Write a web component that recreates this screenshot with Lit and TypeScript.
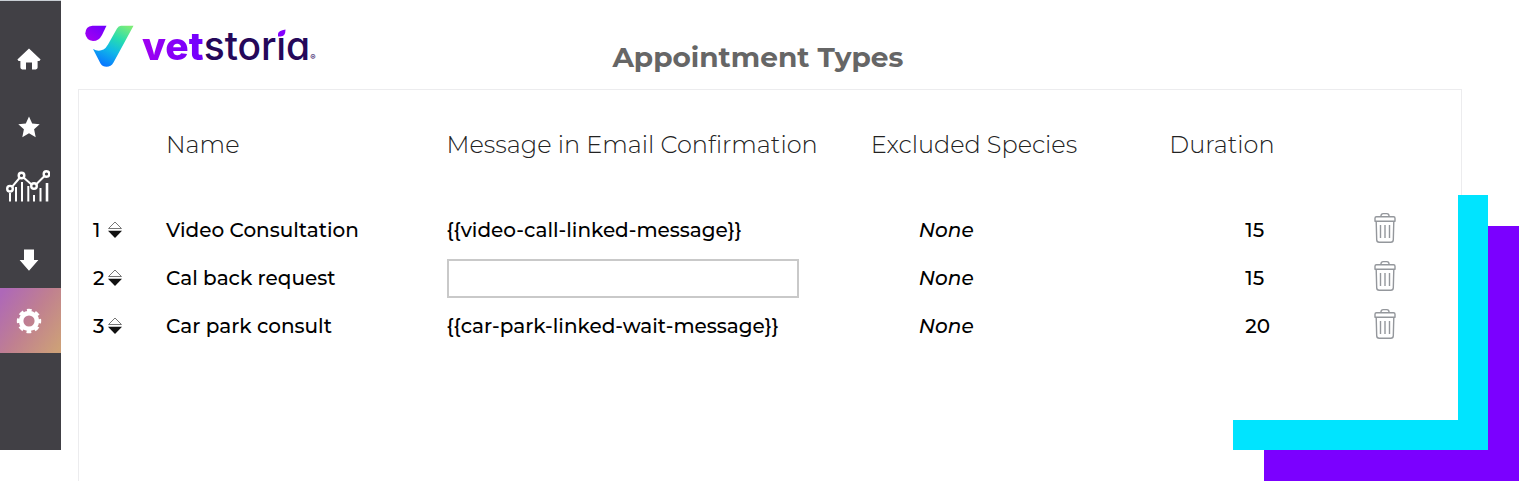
import { LitElement, html, css, svg, nothing } from "lit";
import { customElement, state } from "lit/decorators.js";

interface AppointmentType {
  name: string;
  message: string;
  species: string;
  duration: number;
}

const icons = {
  home: svg`<svg width="24" height="22" viewBox="0 0 24 22" fill="#fff"><path d="M12 .5 23.6 11.6 22.4 13H20.6V19.6Q20.6 21.4 18.8 21.4H15V14.6H9V21.4H5.2Q3.4 21.4 3.4 19.6V13H1.6L.4 11.6Z"/></svg>`,
  star: svg`<svg width="22" height="22" viewBox="0 0 22 22" fill="#fff"><path d="M11 .4 14.2 7.400 21.700 8.200 16.100 13.300 17.700 21.200 11 17.200 4.300 21.200 5.900 13.300.3 8.200 7.800 7.400Z"/></svg>`,
  chart: svg`<svg width="44" height="32" viewBox="0 0 44 32" fill="none" stroke="#fff"><g stroke-width="2"><path d="M4 23V31.500M10 17V31.500M16 12V31.500M22.300 16V31.500M28 25V31.500M34.500 18V31.500"/></g><path stroke-width="2.600" d="M41 13V31.500"/><path stroke-width="2" d="M6 16.800 13.500 8M17.500 7.500 25.500 14.500M30.500 14 38.500 6"/><g stroke-width="2.400"><circle cx="4" cy="18.700" r="2.800"/><circle cx="15.500" cy="5.500" r="2.800"/><circle cx="28" cy="16" r="2.800"/><circle cx="40.500" cy="4" r="2.800"/></g></svg>`,
  down: svg`<svg width="20" height="22" viewBox="0 0 20 22" fill="#fff"><path d="M5 .5H15V11H19.400L10 21.800.6 11H5Z"/></svg>`,
  gear: svg`<svg width="26" height="26" viewBox="0 0 26 26" fill="none" stroke="#fff"><circle cx="13" cy="13" r="7.900" stroke-width="4.600"/><circle cx="13" cy="13" r="10.700" stroke-width="3" stroke-dasharray="4.700 3.703" stroke-dashoffset="2.350"/></svg>`,
  trash: svg`<svg width="24" height="32" viewBox="0 0 24 32" fill="none" stroke="#94979c" stroke-width="1.400" stroke-linejoin="round"><path d="M8 4.500V3.800Q8 1.600 10.200 1.600H13.800Q16 1.600 16 3.800V4.500"/><path d="M3.400 4.700H20.600Q22 4.700 22 6.200V9.300H2V6.200Q2 4.700 3.400 4.700Z"/><path d="M3.200 9.500 3.700 27.800Q3.800 30.300 6.200 30.300H17.800Q20.200 30.300 20.300 27.800L20.800 9.500"/><path d="M7.500 13V26M12 13V26M16.500 13V26"/></svg>`,
  sort: svg`<svg width="16" height="18" viewBox="0 0 16 18"><path d="M1.500 7.500 8 1 14.500 7.500Z" fill="none" stroke="#777" stroke-width="1"/><path d="M1 9.700H15L8 17Z" fill="#111"/></svg>`,
};

@customElement("app-root")
export class AppRoot extends LitElement {
  static styles = css`
    :host {
      display: flex;
      position: relative;
      min-height: 100vh;
      background: #fff;
      color: #000;
      font-family: Montserrat, Inter, "Liberation Sans", sans-serif;
    }
    .sidebar {
      flex: none;
      box-sizing: border-box;
      width: 61px;
      margin-bottom: 31px;
      padding-top: 24px;
      border-top: 1px solid #c8ced4;
      background: #414045;
    }
    .group {
      display: flex;
      flex-direction: column;
    }
    .group + .group {
      margin-top: 21px;
    }
    .item {
      display: flex;
      box-sizing: border-box;
      align-items: center;
      justify-content: center;
      height: 68px;
      padding-right: 3px;
    }
    .item.chart {
      height: 50px;
      padding-right: 5px;
    }
    .item.short {
      height: 56px;
    }
    .item.active {
      height: 65px;
      background: linear-gradient(125deg, #ae68b8 5%, #c08090 50%, #cda078 95%);
    }
    .main {
      display: flex;
      flex: 1;
      flex-direction: column;
      min-width: 0;
      padding: 0 57px 0 17px;
    }
    .header {
      display: grid;
      grid-template-columns: 383fr 617fr;
      height: 89px;
      padding-left: 7px;
    }
    .logo {
      display: flex;
      align-items: flex-start;
      gap: 8px;
      padding-top: 24px;
      color: #25085a;
      text-decoration: none;
    }
    .word {
      display: flex;
      align-items: baseline;
      font-family: Inter, sans-serif;
      font-size: 39px;
      font-weight: 500;
      line-height: 44px;
      font-feature-settings: "cv11";
    }
    .vet {
      background: linear-gradient(90deg, #a000f0, #6f00ff);
      background-clip: text;
      -webkit-background-clip: text;
      color: transparent;
      font-weight: 800;
    }
    .dotted {
      position: relative;
    }
    .leaf {
      position: absolute;
      top: 2px;
      left: 0;
    }
    .reg {
      font-size: 8px;
    }
    .title {
      margin: 0;
      padding-top: 39px;
      color: #666;
      font-size: 28px;
      font-weight: 700;
      line-height: 36px;
      white-space: nowrap;
    }
    .panel {
      flex: 1;
      border: 1px solid #ececee;
      border-bottom: 0;
    }
    .types {
      width: 100%;
      border-collapse: collapse;
      table-layout: fixed;
      text-align: left;
      white-space: nowrap;
    }
    .c-order { width: 6.3%; }
    .c-name { width: 20.3%; }
    .c-message { width: 30.7%; }
    .c-species { width: 21.6%; }
    .c-duration { width: 12.4%; }
    th {
      height: 77px;
      padding: 39px 0 0;
      color: #222;
      font-size: 24px;
      font-weight: 300;
      line-height: 32px;
      vertical-align: top;
    }
    td {
      height: 48px;
      padding: 0;
      font-size: 20px;
      font-weight: 500;
      line-height: 28px;
    }
    .order {
      display: flex;
      align-items: center;
      gap: 2px;
      padding-left: 14px;
    }
    .digit {
      width: 12px;
    }
    .species {
      padding-left: 48px;
      font-style: italic;
    }
    .duration {
      padding-left: 76px;
    }
    button {
      display: flex;
      padding: 0;
      border: 0;
      background: none;
      cursor: pointer;
    }
    .remove {
      margin: 0 auto;
      padding: 0 32px 4px 0;
    }
    .field {
      display: block;
      box-sizing: border-box;
      width: 83%;
      height: 39px;
      padding: 0 8px;
      border: 2px solid #c9c9c9;
      background: #fff;
      font: inherit;
    }
    .corner {
      position: absolute;
      box-sizing: border-box;
      width: 255px;
      height: 255px;
      pointer-events: none;
    }
    .violet {
      right: 0;
      bottom: 0;
      border-right: 31px solid #7b00ff;
      border-bottom: 31px solid #7b00ff;
    }
    .cyan {
      right: 31px;
      bottom: 31px;
      border-right: 30px solid #00e4ff;
      border-bottom: 30px solid #00e4ff;
    }
  `;

  @state() private rows: AppointmentType[] = [
    { name: "Video Consultation", message: "{{video-call-linked-message}}", species: "None", duration: 15 },
    { name: "Cal back request", message: "", species: "None", duration: 15 },
    { name: "Car park consult", message: "{{car-park-linked-wait-message}}", species: "None", duration: 20 },
  ];

  private remove(row: AppointmentType) {
    this.rows = this.rows.filter((r) => r !== row);
  }

  private moveDown(i: number) {
    if (i >= this.rows.length - 1) return;
    const next = [...this.rows];
    [next[i], next[i + 1]] = [next[i + 1], next[i]];
    this.rows = next;
  }

  private renderRow(row: AppointmentType, i: number) {
    return html`<tr>
      <td>
        <div class="order">
          <span class="digit">${i + 1}</span>
          <button aria-label="Reorder" @click=${() => this.moveDown(i)}>${icons.sort}</button>
        </div>
      </td>
      <td>${row.name}</td>
      <td>${row.message ? row.message : html`<input class="field" type="text" aria-label="Message" />`}</td>
      <td class="species">${row.species}</td>
      <td class="duration">${row.duration}</td>
      <td><button class="remove" aria-label="Delete" @click=${() => this.remove(row)}>${icons.trash}</button></td>
    </tr>`;
  }

  private link(label: string, icon: unknown, kind = "") {
    return html`<a class="item ${kind}" href="#" aria-label=${label}
      aria-current=${kind === "active" ? "page" : nothing}>${icon}</a>`;
  }

  render() {
    return html`
      <nav class="sidebar">
        <div class="group">
          ${this.link("Home", icons.home)} ${this.link("Favourites", icons.star)}
          ${this.link("Reports", icons.chart, "chart")}
        </div>
        <div class="group">
          ${this.link("Downloads", icons.down, "short")} ${this.link("Settings", icons.gear, "active")}
        </div>
      </nav>
      <main class="main">
        <header class="header">
          <a class="logo" href="#">
            <svg width="49" height="44" viewBox="0 0 49 44">
              <defs>
                <linearGradient id="drop" x1="0" y1="1" x2="1" y2="0">
                  <stop offset="0" stop-color="#a800f0" /><stop offset="1" stop-color="#6c00ff" />
                </linearGradient>
                <linearGradient id="tick" x1=".85" y1="0" x2=".35" y2="1">
                  <stop offset="0" stop-color="#7cec78" /><stop offset=".35" stop-color="#26dcb0" />
                  <stop offset=".65" stop-color="#10b8e8" /><stop offset="1" stop-color="#0878ff" />
                </linearGradient>
              </defs>
              <path fill="url(#drop)" d="M7.500 1.700H21.500L17 11Q14 17 8 17 1 16 .3 9.500.3 2.500 7.500 1.700Z" />
              <path fill="url(#tick)" d="M36 1.700H48.500L28.500 38.500Q26 42.800 21.500 42.800 17.500 42.800 15.500 39.500L8 25Q13.500 28 18.500 25.500 21 24 23 20.500L32 4.500Q33.500 1.700 36 1.700Z" />
            </svg>
            <span class="word"><span class="vet">vet</span><span>stor</span><span class="dotted">i<svg
              class="leaf" width="11" height="12" viewBox="0 0 11 12"><path fill="#fff" d="M0 0H11V12H0Z" /><path
              fill="#8400ff" d="M2 10.500V8Q2 4.500 9.500 3.500 9.500 10.500 4.500 10.500Z" /></svg></span><span>a</span><span
              class="reg">®</span></span>
          </a>
          <h1 class="title">Appointment Types</h1>
        </header>
        <section class="panel">
          <table class="types">
            <colgroup>
              <col class="c-order" /><col class="c-name" /><col class="c-message" />
              <col class="c-species" /><col class="c-duration" /><col />
            </colgroup>
            <thead>
              <tr>
                <th></th>
                <th scope="col">Name</th>
                <th scope="col">Message in Email Confirmation</th>
                <th scope="col">Excluded Species</th>
                <th scope="col">Duration</th>
                <th></th>
              </tr>
            </thead>
            <tbody>${this.rows.map((row, i) => this.renderRow(row, i))}</tbody>
          </table>
        </section>
      </main>
      <div class="corner violet"></div>
      <div class="corner cyan"></div>
    `;
  }
}
